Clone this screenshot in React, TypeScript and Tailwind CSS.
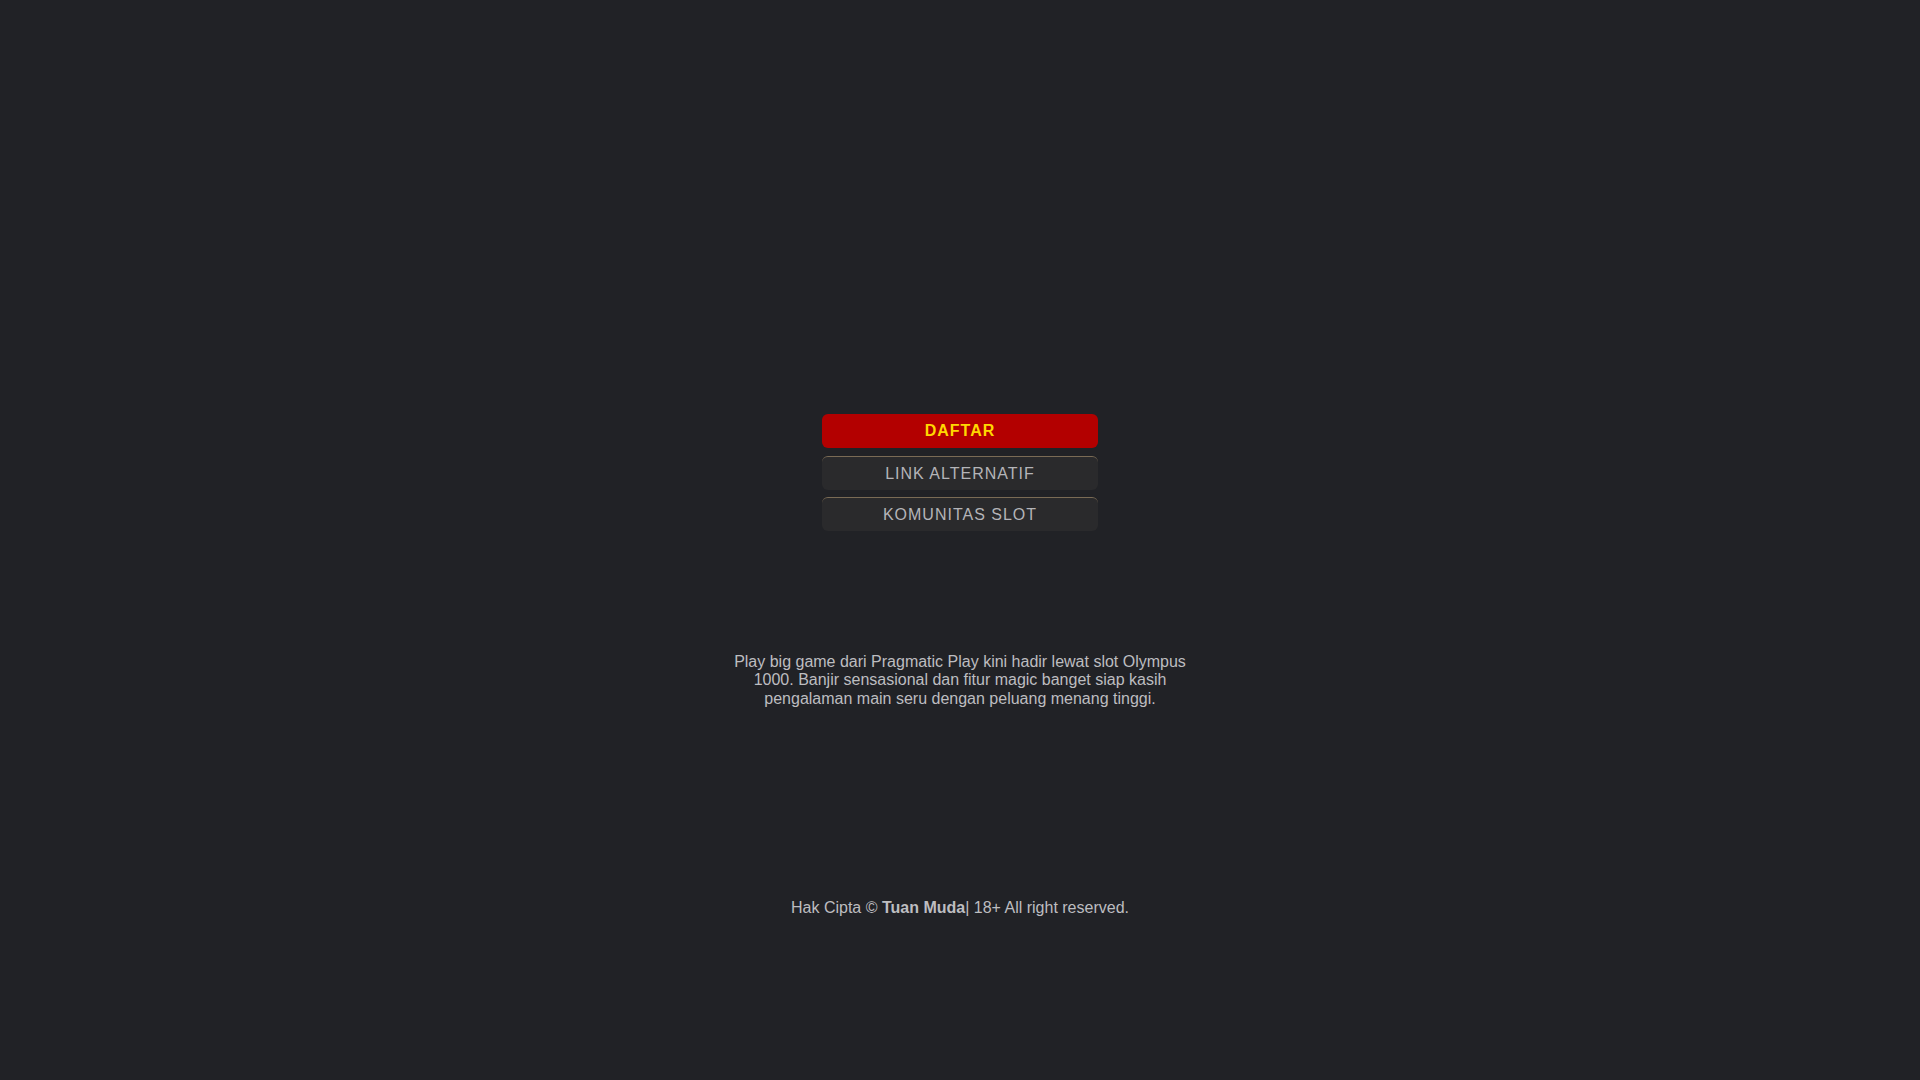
export default function App() {
  return (
    <div
      className="min-h-screen w-full bg-[#212226] flex flex-col items-center"
      style={{ fontFamily: '"Liberation Sans", Arial, sans-serif' }}
    >
      <div className="pt-[414px] w-[276px] flex flex-col gap-[7.5px]">
        <a className="block h-[34px] leading-[34px] text-center rounded-[6px] bg-[#b30000] text-[#ffd700] font-bold text-[16px] tracking-[1px]">
          DAFTAR
        </a>
        <a className="block h-[34px] leading-[33px] text-center rounded-[6px] bg-[#2a2a2c] border-t border-[#7a6b55] text-[#b4b4b8] text-[16px] tracking-[1px]">
          LINK ALTERNATIF
        </a>
        <a className="block h-[34px] leading-[33px] text-center rounded-[6px] bg-[#2a2a2c] border-t border-[#7a6b55] text-[#b4b4b8] text-[16px] tracking-[1px]">
          KOMUNITAS SLOT
        </a>
      </div>
      <p className="mt-[122px] max-w-[460px] text-center text-[16px] leading-[1.15] text-[#bdbdc0]">
        Play big game dari Pragmatic Play kini hadir lewat slot Olympus 1000. Banjir sensasional dan fitur magic banget siap kasih pengalaman main seru dengan peluang menang tinggi.
      </p>
      <p className="mt-[191px] text-center text-[16px] leading-[1.15] text-[#bdbdc0]">
        Hak Cipta © <b>Tuan Muda</b>| 18+ All right reserved.
      </p>
    </div>
  );
}
